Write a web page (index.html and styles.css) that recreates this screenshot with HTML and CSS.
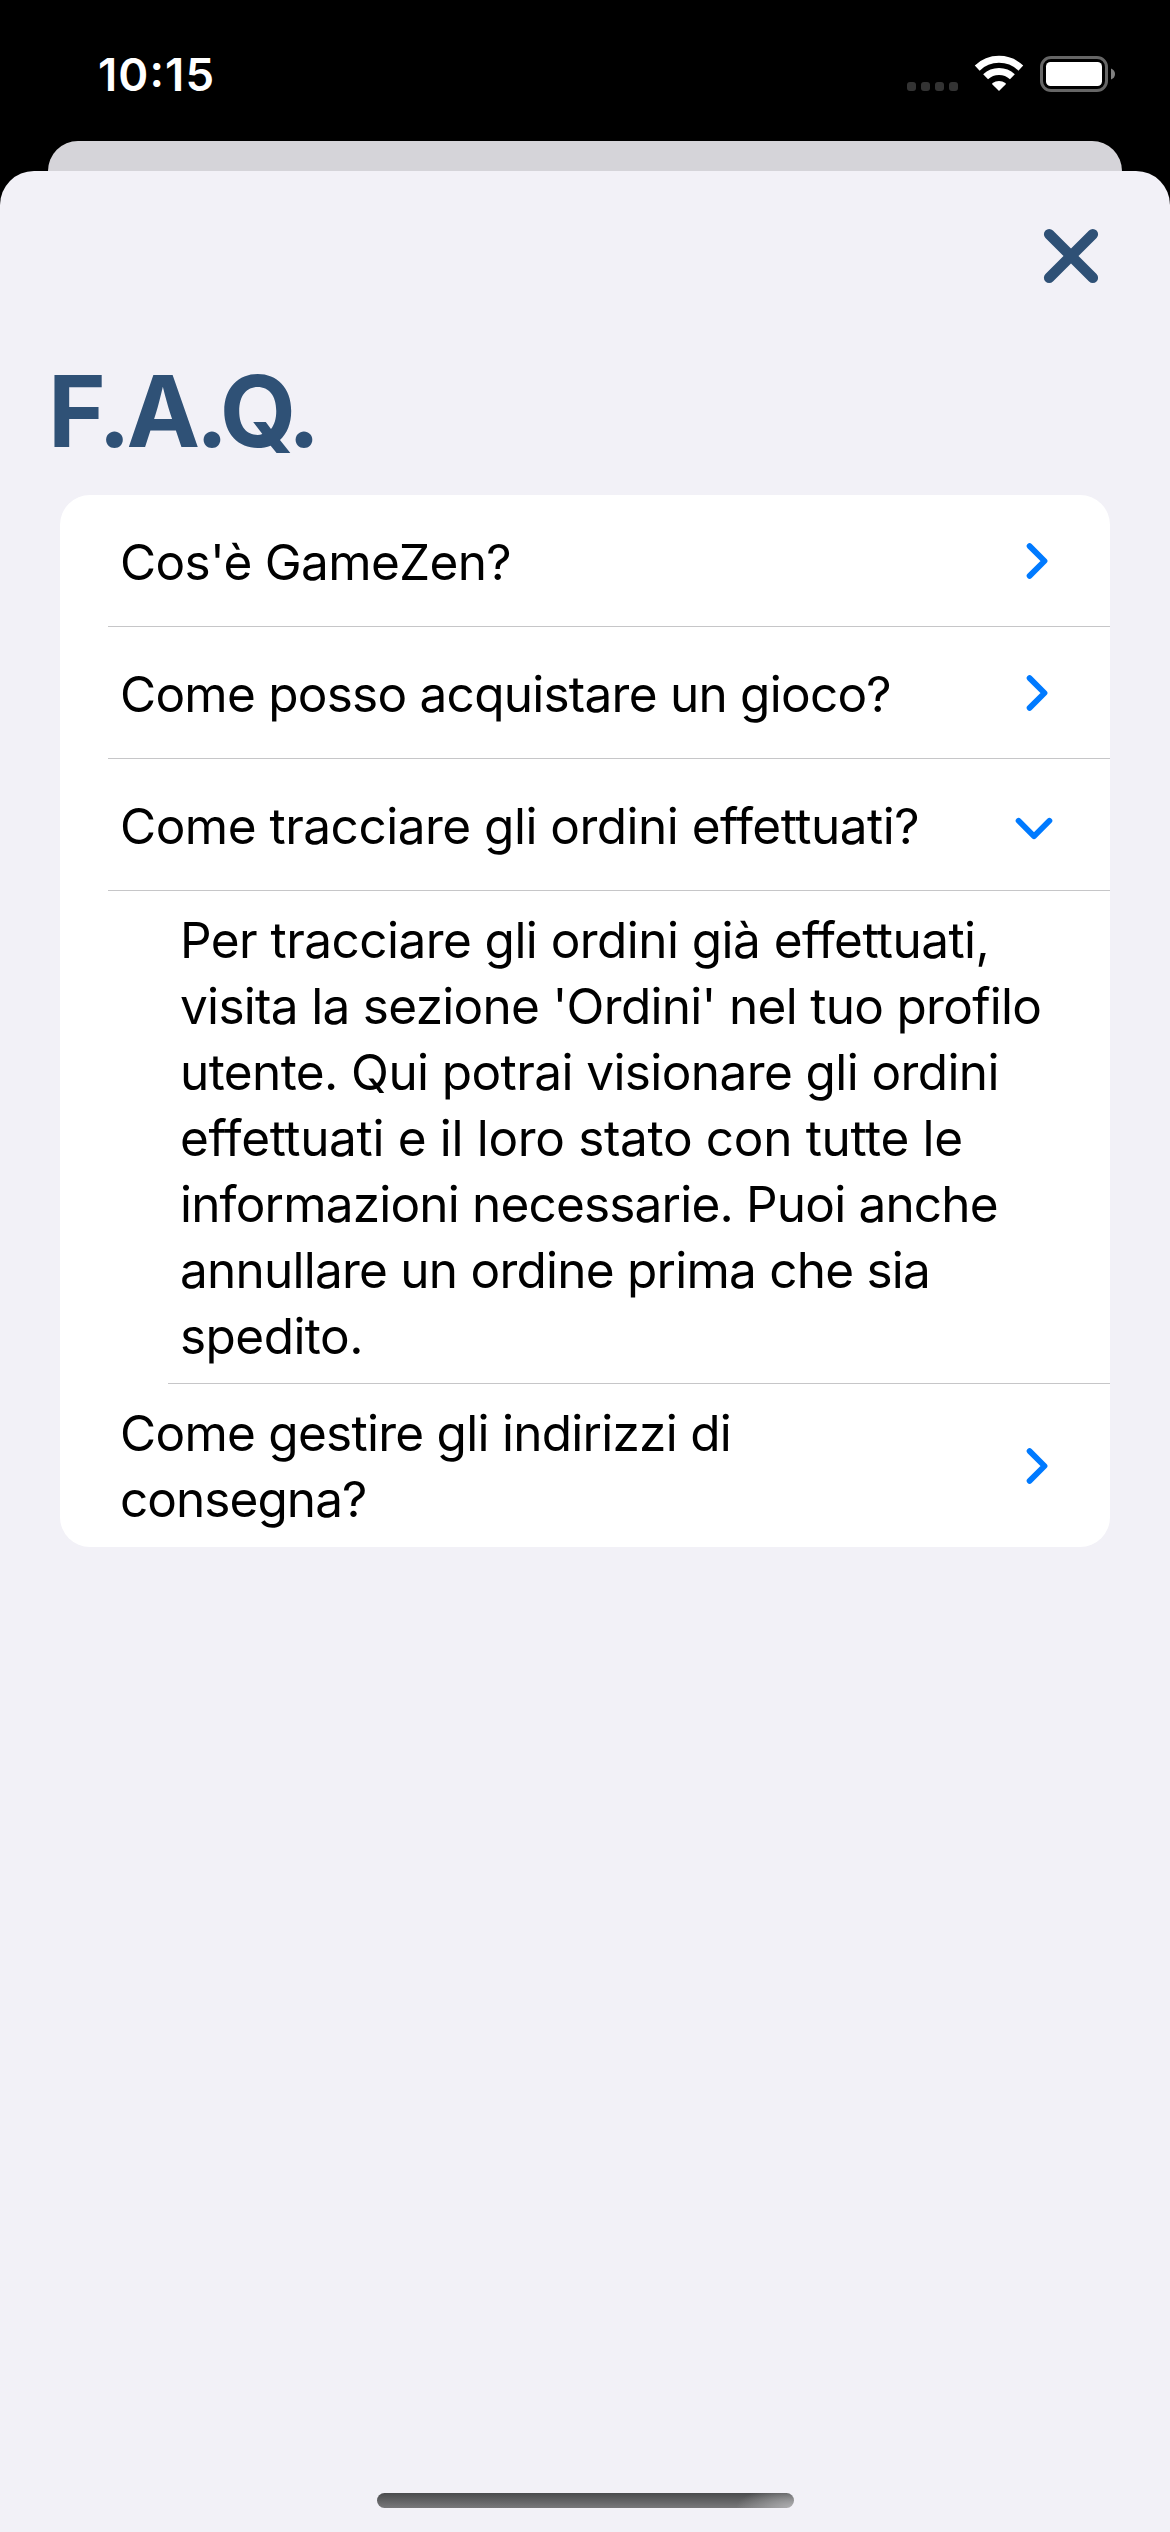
FILE: index.html
```html
<!DOCTYPE html>
<html lang="it">
<head>
<meta charset="utf-8">
<title>F.A.Q.</title>
<link rel="stylesheet" href="styles.css">
</head>
<body>
<div class="screen">
  <header class="status">
    <span class="time">10<span class="colon">:</span>15</span>
    <svg class="status-icons" width="208" height="37" viewBox="0 0 208 37">
      <g fill="#333">
        <rect x="0" y="27" width="9" height="9" rx="3"/>
        <rect x="14" y="27" width="9" height="9" rx="3"/>
        <rect x="28" y="27" width="9" height="9" rx="3"/>
        <rect x="42" y="27" width="9" height="9" rx="3"/>
      </g>
      <g fill="none" stroke="#fff">
        <path d="M70.2 13.1A31.5 31.5 0 0 1 113.8 13.1" stroke-width="7"/>
        <path d="M78.6 21.8A19.3 19.3 0 0 1 105.4 21.8" stroke-width="7"/>
      </g>
      <path d="M92 36L85.2 29.2Q85 28.6 85.6 28.1A10.5 10.5 0 0 1 98.4 28.1Q99 28.6 98.8 29.2Z" fill="#fff"/>
      <rect x="134.5" y="2.500" width="65" height="33" rx="9.500" fill="none" stroke="#666" stroke-width="3"/>
      <rect x="139" y="7" width="56" height="24" rx="4.500" fill="#fff"/>
      <path d="M204 13.500Q208 15 208 19T204 24.500Z" fill="#808080"/>
    </svg>
  </header>
  <div class="sheet-behind"></div>
  <main class="sheet">
    <button class="close" aria-label="Chiudi">
      <svg width="56" height="56" viewBox="0 0 56 56"><path d="M6.200 6.200L49.800 49.800M49.800 6.200L6.200 49.800"/></svg>
    </button>
    <h1 class="title">F.A.Q.</h1>
    <section class="card">
      <div class="row">
        <p class="question"><span class="line q1">Cos'è GameZen?</span></p>
        <svg class="chevron" width="42" height="42" viewBox="0 0 42 42"><path d="M15.600 6.100L30.500 21L15.600 35.900"/></svg>
      </div>
      <div class="row">
        <p class="question"><span class="line q2">Come posso acquistare un gioco?</span></p>
        <svg class="chevron" width="42" height="42" viewBox="0 0 42 42"><path d="M15.600 6.100L30.500 21L15.600 35.900"/></svg>
      </div>
      <div class="row">
        <p class="question"><span class="line q3">Come tracciare gli ordini effettuati?</span></p>
        <svg class="chevron" width="42" height="42" viewBox="0 0 42 42"><path d="M4.600 16.800L20 32.200L35.400 16.800"/></svg>
      </div>
      <div class="answer">
        <p>
          <span class="line a1">Per tracciare gli ordini già effettuati,</span>
          <span class="line a2">visita la sezione 'Ordini' nel tuo profilo</span>
          <span class="line a3">utente. Qui potrai visionare gli ordini</span>
          <span class="line a4">effettuati e il loro stato con tutte le</span>
          <span class="line a5">informazioni necessarie. Puoi anche</span>
          <span class="line a6">annullare un ordine prima che sia</span>
          <span class="line a7">spedito.</span>
        </p>
      </div>
      <div class="row row-last">
        <p class="question"><span class="line q4">Come gestire gli indirizzi di</span><span class="line q5">consegna?</span></p>
        <svg class="chevron" width="42" height="42" viewBox="0 0 42 42"><path d="M15.600 6.100L30.500 21L15.600 35.900"/></svg>
      </div>
    </section>
    <div class="home-indicator"></div>
  </main>
</div>
</body>
</html>
```
FILE: styles.css
```css
* { box-sizing: border-box; margin: 0; padding: 0; }
body { background: #000; font-family: Inter, "Liberation Sans", sans-serif; }
.screen { width: 1170px; height: 2532px; display: flex; flex-direction: column; overflow: hidden; background: #000; }
.status { height: 141px; display: flex; justify-content: space-between; align-items: flex-start; padding: 55px 55px 0 98px; flex: none; }
.time { color: #fff; font-size: 45.5px; font-weight: 600; line-height: 40px; letter-spacing: 1.1px; }
.colon { display: inline-block; transform: translateY(-4px); }
.status-icons { flex: none; }
.sheet-behind { height: 30px; flex: none; margin: 0 48px; background: #d5d4d9; border-radius: 30px 30px 0 0; }
.sheet { flex: 1; display: flex; flex-direction: column; background: #f2f1f7; border-radius: 34px 34px 0 0; }
.close { align-self: flex-end; width: 56px; height: 56px; margin: 57px 71px 0 0; border: 0; background: none; }
.close svg { display: block; fill: none; stroke: #2f5176; stroke-width: 10.6; stroke-linecap: round; }
.title { margin: 67px 0 0 48px; color: #2f5176; font-size: 98.6px; font-weight: 700; line-height: 120px; letter-spacing: -4.5px; }
.card { margin: 24px 60px 0; background: #fff; border-radius: 30px; overflow: hidden; flex: none; }
.row { position: relative; display: flex; justify-content: space-between; align-items: center; height: 132px; padding: 0 54px 0 60px; }
.row .question { padding-top: 2px; }
.row-last { height: 163px; }
.row-last .question { padding-top: 0; }
.row:not(.row-last)::after, .answer::after { content: ""; position: absolute; left: 48px; right: 0; bottom: 0; height: 1px; background: #c6c6c8; }
.line { display: block; color: #000; font-size: 49.5px; line-height: 66px; white-space: nowrap; }
.chevron { flex: none; fill: none; stroke: #007aff; stroke-width: 5.8; stroke-linecap: round; stroke-linejoin: round; }
.answer { position: relative; height: 493px; padding: 16px 0 0 120px; }
.answer::after { left: 108px; }
.q1 { letter-spacing: -.67px; }
.q2 { letter-spacing: -.75px; }
.q3 { letter-spacing: -.5px; }
.q4 { letter-spacing: -.73px; }
.q5 { letter-spacing: -.95px; }
.a1 { letter-spacing: -.55px; }
.a2 { letter-spacing: -.7px; }
.a3 { letter-spacing: -.59px; }
.a4 { letter-spacing: -.33px; }
.a5 { letter-spacing: -.81px; }
.a6 { letter-spacing: -.76px; }
.a7 { letter-spacing: -.55px; }
.home-indicator { width: 417px; height: 15px; margin: auto auto 24px; border-radius: 8px; background: radial-gradient(ellipse 58px 22px at 100% 100%, #b0b0b2, transparent), linear-gradient(#4a4b4d, #78787a); }
```
